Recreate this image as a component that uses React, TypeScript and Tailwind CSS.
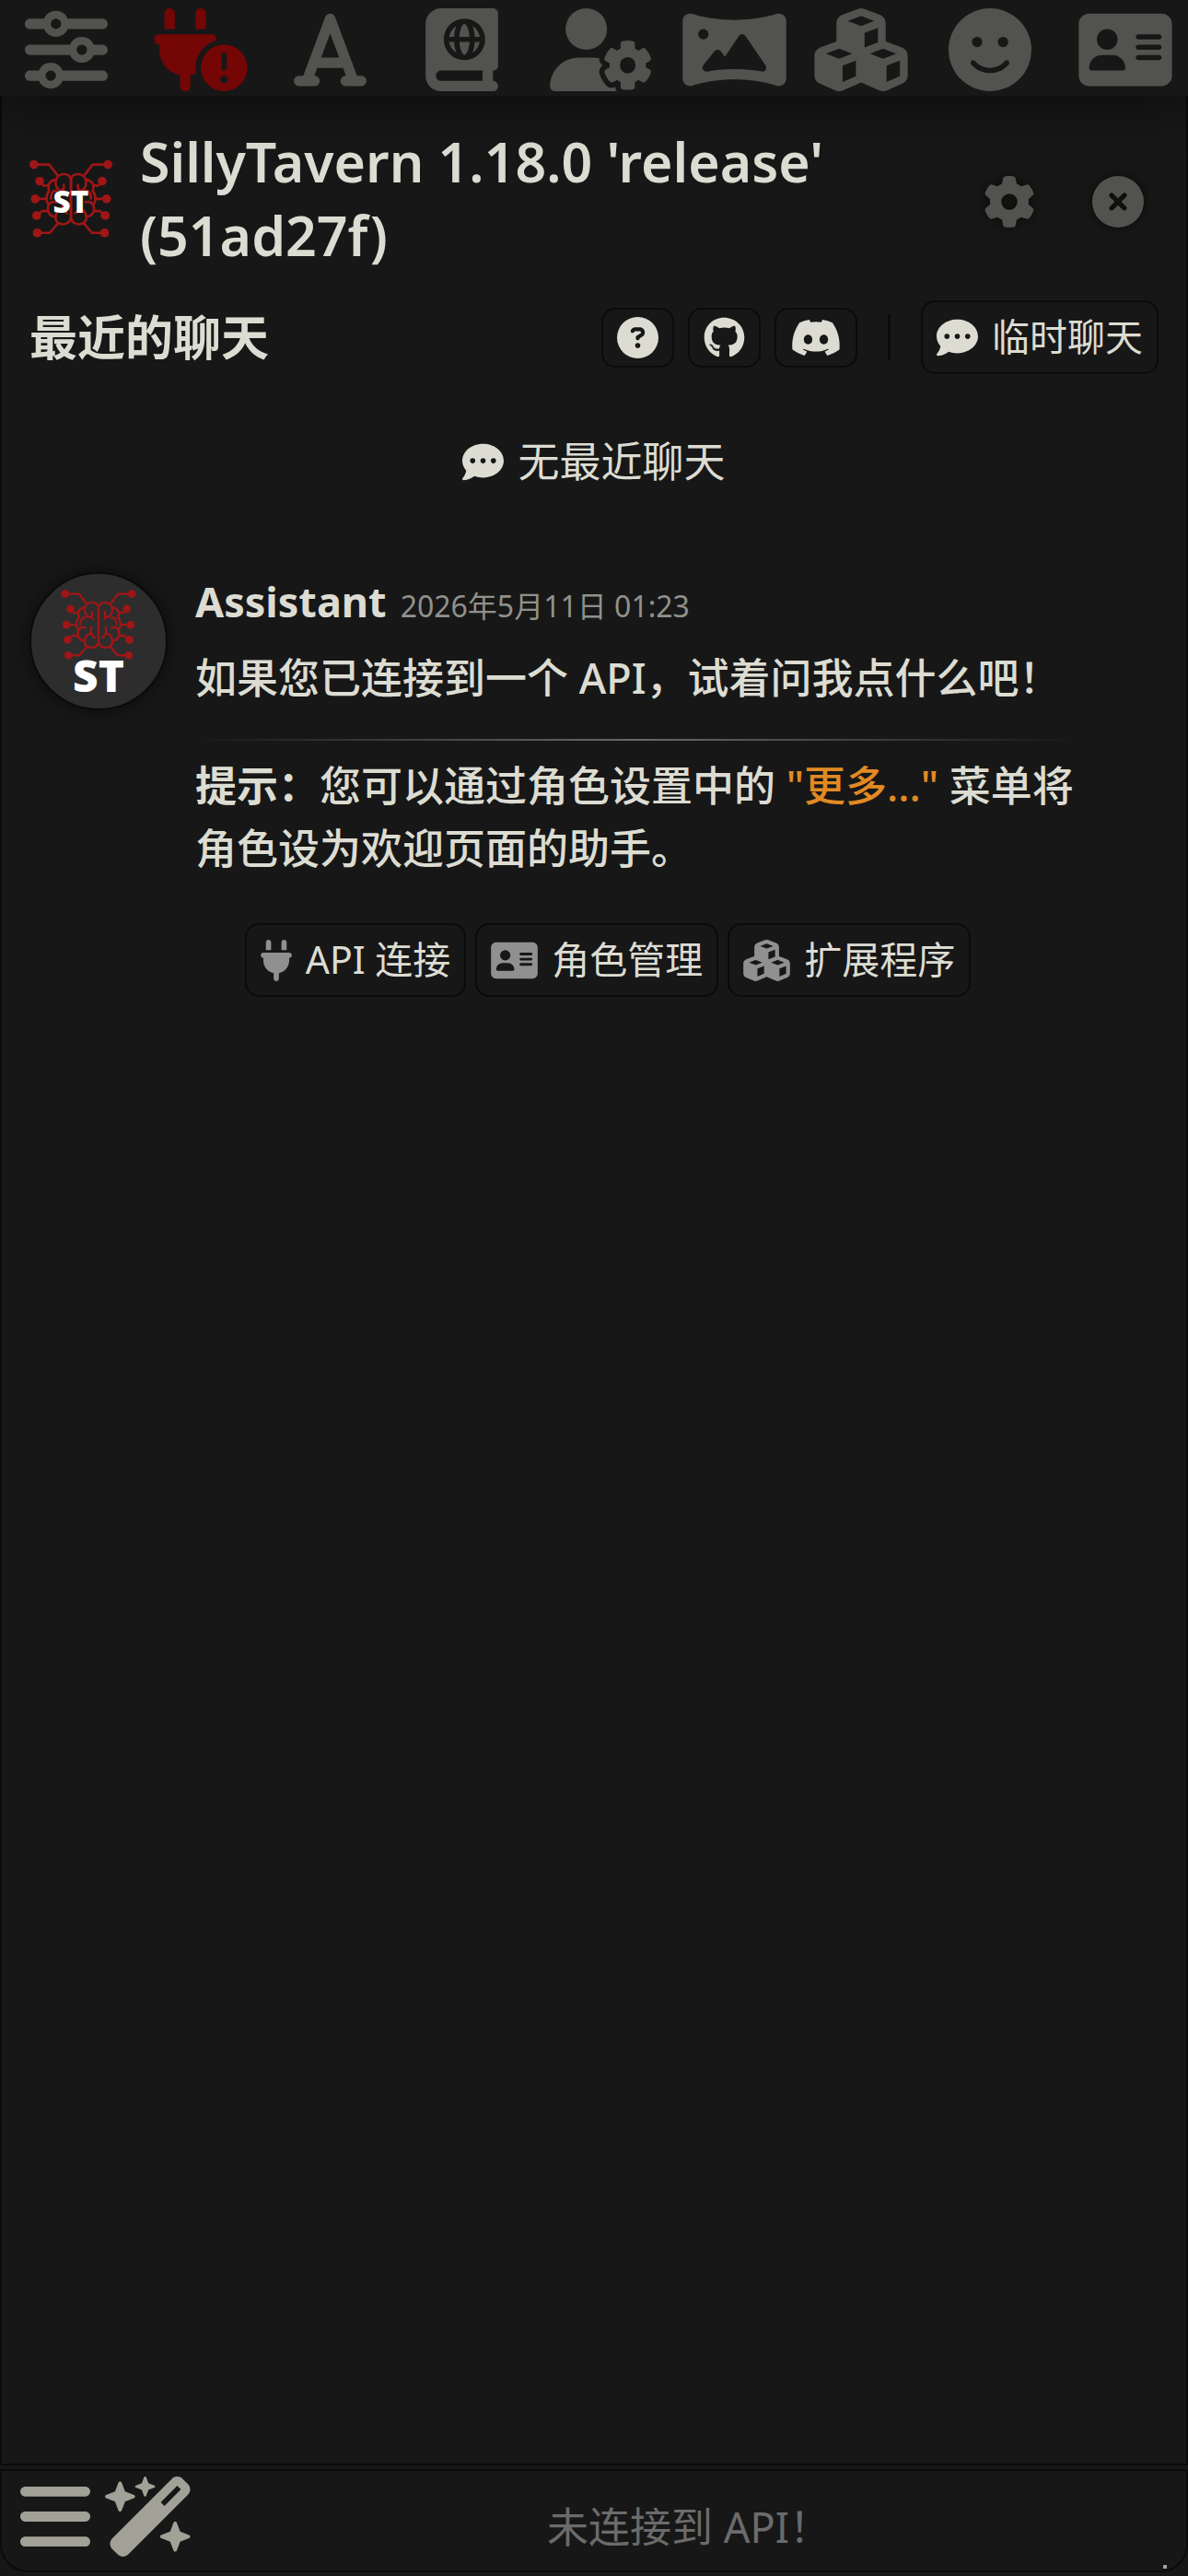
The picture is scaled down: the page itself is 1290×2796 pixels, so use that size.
import {
  FaAddressCard,
  FaBars,
  FaBookAtlas,
  FaCircleQuestion,
  FaCircleXmark,
  FaCommentDots,
  FaCubes,
  FaDiscord,
  FaFaceSmile,
  FaFont,
  FaGear,
  FaGithub,
  FaPanorama,
  FaPlug,
  FaPlugCircleExclamation,
  FaSliders,
  FaUserGear,
  FaWandMagicSparkles,
} from 'react-icons/fa6';
import type { IconType } from 'react-icons';

// Font Awesome glyphs differ in width, so each entry carries its own
const topIcons: { label: string; icon: IconType; size: string; alert?: boolean }[] = [
  { label: 'AI 响应配置', icon: FaSliders, size: 'w-[90px]' },
  { label: 'API 连接', icon: FaPlugCircleExclamation, size: 'w-[102px]', alert: true },
  { label: '高级格式化', icon: FaFont, size: 'w-[79px]' },
  { label: '世界信息', icon: FaBookAtlas, size: 'w-[79px]' },
  { label: '用户设置', icon: FaUserGear, size: 'w-[113px]' },
  { label: '背景', icon: FaPanorama, size: 'w-[113px]' },
  { label: '扩展程序', icon: FaCubes, size: 'w-[102px]' },
  { label: '用户角色', icon: FaFaceSmile, size: 'w-[90px]' },
  { label: '角色管理', icon: FaAddressCard, size: 'w-[102px]' },
];

const links: { label: string; href: string; icon: IconType; size: string }[] = [
  { label: '文档', href: 'https://docs.sillytavern.app/', icon: FaCircleQuestion, size: 'w-[45px]' },
  { label: 'GitHub', href: 'https://github.com/SillyTavern/SillyTavern', icon: FaGithub, size: 'w-[45px]' },
  { label: 'Discord', href: 'https://discord.gg/sillytavern', icon: FaDiscord, size: 'w-[56px]' },
];

const shortcuts: { label: string; icon: IconType; size: string }[] = [
  { label: 'API 连接', icon: FaPlug, size: 'w-[34px]' },
  { label: '角色管理', icon: FaAddressCard, size: 'w-[51px]' },
  { label: '扩展程序', icon: FaCubes, size: 'w-[51px]' },
];

function BrainHalf() {
  return (
    <>
      <path d="M211 135H256L281 167M228 184L241 198L256 195M215 236H248M219 285L235 272H252M221 336H258L284 305" />
      <path d="M320 292V182C320 156 277 156 275 186C275 200 282 210 294 212C301 207 301 201 298 192M276 179C258 181 249 196 256 212C246 223 246 243 254 254C248 272 257 289 275 288C270 318 320 318 320 290" />
      <path d="M294 205L304 220M280 213C267 210 260 219 261 238M254 254C261 242 270 244 280 246M298 240C290 256 297 272 310 280M275 289C276 274 285 266 296 265" />
      <g fill="#9f1616" stroke="none">
        <circle cx="211" cy="135" r="13" />
        <circle cx="228" cy="184" r="13" />
        <circle cx="215" cy="236" r="13" />
        <circle cx="219" cy="285" r="13" />
        <circle cx="221" cy="336" r="13" />
      </g>
    </>
  );
}

function Brain() {
  return (
    <g fill="none" stroke="#9f1616" strokeWidth="7" strokeLinejoin="round">
      <BrainHalf />
      <g transform="translate(640 0) scale(-1 1)">
        <BrainHalf />
      </g>
    </g>
  );
}

function TopBar() {
  return (
    <nav className="relative z-10 flex h-[104px] items-center bg-[#171717] shadow-[0_0_60px_rgba(0,0,0,0.6)]">
      {topIcons.map(({ label, icon: Icon, size, alert }) => (
        <div key={label} className="flex min-w-0 flex-1 justify-center">
          <button
            aria-label={label}
            className={`flex w-[95px] pt-1 ${alert ? 'text-[#740606]' : 'text-[#52524e]'}`}
          >
            <Icon className={`mx-auto h-[90px] shrink-0 ${size}`} />
          </button>
        </div>
      ))}
    </nav>
  );
}

function WelcomeHeader() {
  return (
    <header>
      <div className="flex items-center">
        <svg viewBox="198 120 244 230" className="h-[85px] w-[90px] shrink-0">
          <Brain />
          <text
            x="320"
            y="276"
            textAnchor="middle"
            fill="#fff"
            fontSize="90"
            fontWeight="900"
            fontFamily="Noto Sans, sans-serif"
          >
            ST
          </text>
        </svg>
        <h1 className="ml-[30px] flex-1 text-[59px] leading-[80px] font-semibold">
          SillyTavern 1.18.0 'release' (51ad27f)
        </h1>
        <div className="flex gap-[62px] pt-2 pr-4 pl-20 text-[#52524e]">
          <button aria-label="设置" className="drop-shadow-[0_0_6px_rgba(0,0,0,0.6)]">
            <FaGear className="size-14" />
          </button>
          <button aria-label="关闭" className="drop-shadow-[0_0_6px_rgba(0,0,0,0.6)]">
            <FaCircleXmark className="size-14" />
          </button>
        </div>
      </div>

      <div className="mt-[31px] flex items-center justify-between">
        <h2 className="text-[52px] leading-[80px] font-bold">最近的聊天</h2>
        <div className="flex items-center">
          <div className="flex items-center gap-[15px]">
            {links.map(({ label, href, icon: Icon, size }) => (
              <a
                key={label}
                href={href}
                aria-label={label}
                className="rounded-[15px] border-2 border-[#0b0b0b] px-[15px] py-2"
              >
                <Icon className={`h-[45px] ${size}`} />
              </a>
            ))}
          </div>
          <span className="mx-[33px] h-[50px] w-[3px] bg-[#0b0b0b]" />
          <button className="flex h-20 items-center gap-[15px] rounded-[15px] border-2 border-[#0b0b0b] px-[15px] text-[41px]">
            <FaCommentDots className="size-[45px]" />
            临时聊天
          </button>
        </div>
      </div>

      <p className="mt-[61px] flex items-center justify-center gap-[15px] text-[45px] leading-[68px]">
        <FaCommentDots className="size-[45px]" />
        无最近聊天
      </p>
    </header>
  );
}

function AssistantMessage() {
  return (
    <article className="mt-[86px] flex items-start">
      <svg
        viewBox="100 70 440 440"
        className="size-[150px] shrink-0 rounded-full border-2 border-[#0b0b0b] bg-[#2d2d2d] shadow-[0_0_20px_rgba(0,0,0,0.5)]"
      >
        <Brain />
        <text
          x="320"
          y="456"
          textAnchor="middle"
          fill="#fff"
          fontSize="144"
          fontWeight="900"
          fontFamily="Noto Sans, sans-serif"
        >
          ST
        </text>
      </svg>
      <div className="ml-[30px] flex-1 pr-[90px]">
        <div className="flex items-baseline gap-[15px] leading-[64px]">
          <span className="text-[45px] font-bold">Assistant</span>
          <time className="text-[32px] text-[#91918b]">2026年5月11日 01:23</time>
        </div>
        <div className="mt-3 text-[45px] leading-[68px] font-medium">
          <p>如果您已连接到一个 API，试着问我点什么吧！</p>
          <hr className="mt-8 mb-[15px] h-0.5 border-0 bg-linear-to-r from-transparent via-[#6a6a65] to-transparent" />
          <p>
            <strong className="font-bold">提示：</strong>您可以通过角色设置中的{' '}
            <q className="text-[#e18a24] before:content-none after:content-none">"更多..."</q> 菜单将角色设为欢迎页面的助手。
          </p>
        </div>
      </div>
    </article>
  );
}

export default function App() {
  return (
    <div
      lang="zh-CN"
      className="flex min-h-screen flex-col bg-[#171717] pb-1 font-['Noto_Sans','Noto_Sans_CJK_SC',sans-serif] text-[#dcdcd2]"
    >
      <TopBar />
      <main className="flex-1 border-2 border-t-0 border-[#0b0b0b] px-[30px] pt-[31px]">
        <WelcomeHeader />
        <AssistantMessage />
        <div className="mt-[47px] flex justify-center gap-[10px] pl-[30px]">
          {shortcuts.map(({ label, icon: Icon, size }) => (
            <button
              key={label}
              className="flex h-20 items-center gap-[15px] rounded-[15px] border-2 border-[#0b0b0b] px-[15px] text-[41px]"
            >
              <Icon className={`h-[45px] text-[#909090] ${size}`} />
              {label}
            </button>
          ))}
        </div>
      </main>
      <form className="relative mt-1 flex h-[112px] items-start rounded-b-[30px] border-2 border-[#0b0b0b] pl-5">
        <button type="button" aria-label="选项" className="mt-[6px] text-[#a1a198]">
          <FaBars className="h-[87px] w-[76px]" />
        </button>
        <button type="button" aria-label="扩展菜单" className="mt-[6px] ml-4 text-[#a1a198]">
          <FaWandMagicSparkles className="h-[87px] w-[98px]" />
        </button>
        <input
          aria-label="消息"
          placeholder="未连接到 API！"
          className="h-full min-w-0 flex-1 bg-transparent pt-3 pr-1 text-center text-[45px] outline-none placeholder:text-[#6b6b6b]"
        />
        <span className="absolute right-[21px] bottom-0.5 size-1 bg-[#a0a0a0]" />
      </form>
    </div>
  );
}
